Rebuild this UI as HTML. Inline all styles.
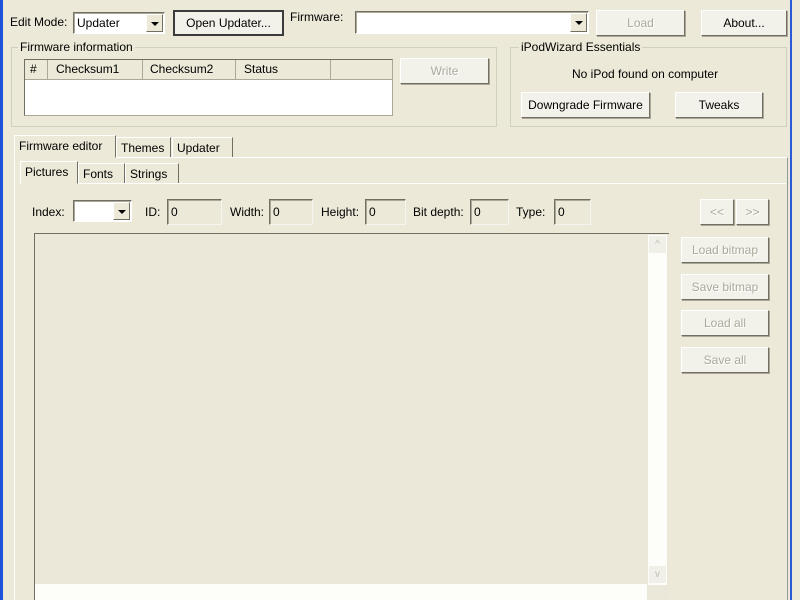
<!DOCTYPE html>
<html style="overflow:hidden"><head><style>
*{box-sizing:border-box}
html,body{overflow:hidden}
body{margin:0;width:800px;height:600px;background:#ece9d8;font-family:"Liberation Sans",sans-serif;font-size:12px;color:#000;position:relative}
.a{position:absolute}
.t{position:absolute;white-space:nowrap;line-height:14px}
.btn{position:absolute;background:#f3f2ea;border:1px solid #fff;border-right-color:#716f64;border-bottom-color:#716f64;box-shadow:1px 1px 0 #aca899;text-align:center;display:flex;align-items:center;justify-content:center}
.dis{color:#aca899;text-shadow:1px 1px 0 #fff}
.edit{position:absolute;background:#fff;border:1px solid #fff;border-top-color:#716f64;border-left-color:#716f64;box-shadow:inset 1px 1px 0 #aca899;padding-left:3px;line-height:20px}
.ro{background:#ece9d8;line-height:24px;border-right-color:#f5f4ee;border-bottom-color:#f5f4ee}
.grp{position:absolute;border:1px solid #d0d0bf}
.leg{position:absolute;background:#ece9d8;padding:0 2px;top:-8px;left:6px;line-height:14px}
.arrow{position:absolute;right:1px;top:1px;bottom:1px;width:17px;background:#ece9d8;border:1px solid #fff;border-right-color:#716f64;border-bottom-color:#716f64}
.arrow:after{content:"";position:absolute;left:4px;top:7px;border-left:4px solid transparent;border-right:4px solid transparent;border-top:4px solid #000}
.tab{position:absolute;border:1px solid #fff;border-bottom:none;border-right-color:#716f64;background:#ece9d8;padding:0 4px;line-height:20px}
.hd{position:absolute;top:0;height:20px;border-right:1px solid #aca899;border-bottom:1px solid #aca899;padding-left:5px;line-height:19px;background:#ece9d8}
</style></head><body>
<div class="a" style="left:0;top:0;width:3px;height:600px;background:#1d53d9"></div>
<div class="a" style="left:790px;top:0;width:2px;height:600px;background:#2a5ad8"></div>

<div class="t" style="left:10px;top:15px">Edit Mode:</div>
<div class="edit" style="left:73px;top:12px;width:92px;height:22px">Updater<div class="arrow"></div></div>
<div class="btn" style="left:173px;top:10px;width:111px;height:26px;border:2px solid #3c3c3c;box-shadow:none">Open Updater...</div>
<div class="t" style="left:290px;top:10px">Firmware:</div>
<div class="edit" style="left:355px;top:11px;width:234px;height:23px"><div class="arrow"></div></div>
<div class="btn dis" style="left:596px;top:10px;width:89px;height:26px">Load</div>
<div class="btn" style="left:701px;top:10px;width:86px;height:26px">About...</div>

<div class="grp" style="left:11px;top:47px;width:486px;height:80px"><div class="leg">Firmware information</div></div>
<div class="a" style="left:24px;top:59px;width:369px;height:57px;background:#fff;border:1px solid #aca899;border-top-color:#716f64;border-left-color:#716f64;overflow:hidden">
<div class="hd" style="left:0;width:23px">#</div>
<div class="hd" style="left:23px;width:95px;padding-left:8px">Checksum1</div>
<div class="hd" style="left:118px;width:93px;padding-left:7px">Checksum2</div>
<div class="hd" style="left:211px;width:95px;padding-left:8px">Status</div>
<div class="hd" style="left:306px;width:70px"></div>
</div>
<div class="btn dis" style="left:400px;top:58px;width:89px;height:26px">Write</div>

<div class="grp" style="left:510px;top:47px;width:277px;height:80px"><div class="leg" style="left:8px">iPodWizard Essentials</div></div>
<div class="t" style="left:572px;top:67px">No iPod found on computer</div>
<div class="btn" style="left:521px;top:92px;width:129px;height:26px">Downgrade Firmware</div>
<div class="btn" style="left:675px;top:92px;width:88px;height:26px">Tweaks</div>

<div class="a" style="left:14px;top:157px;width:774px;height:450px;border:1px solid #fff;border-right-color:#919b9c"></div>
<div class="tab" style="left:14px;top:135px;width:102px;height:23px;border-bottom:1px solid #ece9d8">Firmware editor</div>
<div class="tab" style="left:116px;top:137px;width:55px;height:20px">Themes</div>
<div class="tab" style="left:172px;top:137px;width:61px;height:20px">Updater</div>

<div class="a" style="left:20px;top:183px;width:766px;height:1px;background:#fff"></div>
<div class="tab" style="left:20px;top:161px;width:58px;height:23px;border-bottom:1px solid #ece9d8">Pictures</div>
<div class="tab" style="left:78px;top:163px;width:47px;height:20px">Fonts</div>
<div class="tab" style="left:125px;top:163px;width:54px;height:20px">Strings</div>

<div class="t" style="left:32px;top:205px">Index:</div>
<div class="edit" style="left:73px;top:200px;width:59px;height:22px"><div class="arrow"></div></div>
<div class="t" style="left:145px;top:205px">ID:</div>
<div class="edit ro" style="left:167px;top:199px;width:55px;height:26px">0</div>
<div class="t" style="left:230px;top:205px">Width:</div>
<div class="edit ro" style="left:269px;top:199px;width:44px;height:26px">0</div>
<div class="t" style="left:321px;top:205px">Height:</div>
<div class="edit ro" style="left:365px;top:199px;width:41px;height:26px">0</div>
<div class="t" style="left:413px;top:205px">Bit depth:</div>
<div class="edit ro" style="left:470px;top:199px;width:39px;height:26px">0</div>
<div class="t" style="left:516px;top:205px">Type:</div>
<div class="edit ro" style="left:554px;top:199px;width:37px;height:26px">0</div>
<div class="btn dis" style="left:700px;top:199px;width:34px;height:26px">&lt;&lt;</div>
<div class="btn dis" style="left:736px;top:199px;width:33px;height:26px">&gt;&gt;</div>

<div class="a" style="left:34px;top:233px;width:635px;height:367px;border:1px solid #716f64;border-right:none;border-bottom:none;background:#ebe8da"></div>
<div class="a" style="left:648px;top:235px;width:19px;height:350px;background:#fdfdfa"></div>
<div class="a" style="left:649px;top:236px;width:17px;height:17px;background:#f0efe8;color:#c0bdb0;font-size:10px;text-align:center;line-height:17px">^</div>
<div class="a" style="left:649px;top:566px;width:17px;height:17px;background:#f0efe8;color:#c0bdb0;font-size:10px;text-align:center;line-height:17px">v</div>
<div class="a" style="left:35px;top:584px;width:612px;height:16px;background:#fdfdfa"></div>

<div class="btn dis" style="left:681px;top:237px;width:88px;height:26px">Load bitmap</div>
<div class="btn dis" style="left:681px;top:274px;width:88px;height:26px">Save bitmap</div>
<div class="btn dis" style="left:681px;top:310px;width:88px;height:26px">Load all</div>
<div class="btn dis" style="left:681px;top:347px;width:88px;height:26px">Save all</div>
</body></html>
